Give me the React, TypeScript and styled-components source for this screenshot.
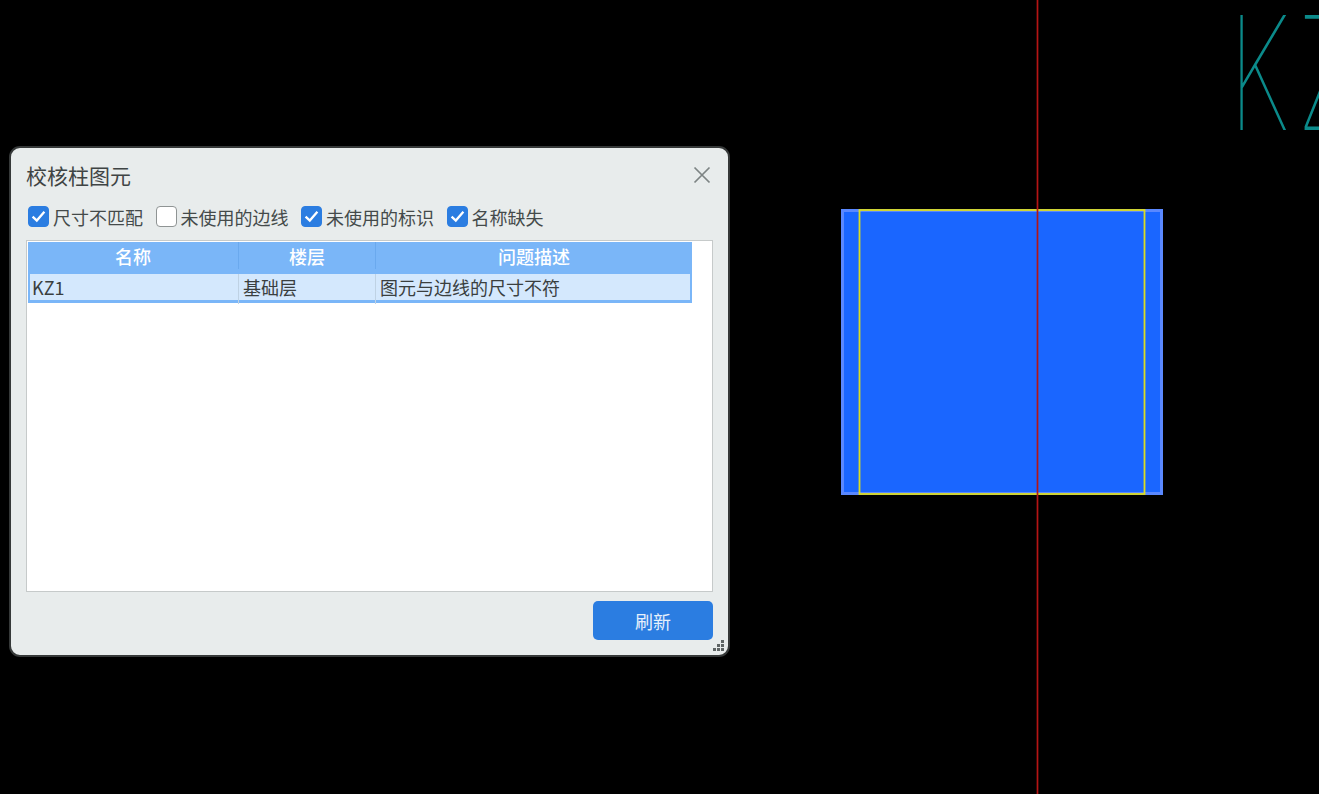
import React from "react";
import styled, { createGlobalStyle } from "styled-components";

const GlobalStyle = createGlobalStyle`
  html, body {
    margin: 0;
    padding: 0;
    background: #000;
    overflow: hidden;
  }
  * {
    box-sizing: border-box;
  }
`;

const Viewport = styled.div`
  position: relative;
  width: 1319px;
  height: 794px;
  background: #000;
  overflow: hidden;
  font-family: "Noto Sans CJK SC", "Noto Sans", sans-serif;
`;

const Drawing = styled.svg`
  position: absolute;
  inset: 0;
`;

const ColumnLabel = styled.div`
  position: absolute;
  left: 1229px;
  top: -22px;
  font-family: Inter, "Liberation Sans", sans-serif;
  font-size: 158px;
  font-weight: 100;
  line-height: 190px;
  letter-spacing: 12px;
  color: #0b8a8a;
  white-space: nowrap;
  transform: scaleX(0.64);
  transform-origin: left top;
`;

const Dialog = styled.div`
  position: absolute;
  left: 9px;
  top: 146px;
  width: 721px;
  height: 511px;
  display: flex;
  flex-direction: column;
  padding: 0 15px 15px;
  background: #e8ecec;
  border: 2px solid #363939;
  border-radius: 11px;
`;

const TitleBar = styled.div`
  height: 47px;
  flex: none;
  display: flex;
  align-items: center;
  justify-content: space-between;
  padding-top: 6px;
`;

const Title = styled.div`
  font-size: 21px;
  color: #3f4444;
`;

const CloseButton = styled.button`
  width: 20px;
  height: 20px;
  padding: 0;
  margin-right: 1px;
  border: none;
  background: none;
  display: flex;
  color: #7d8484;
`;

const FilterRow = styled.div`
  height: 45px;
  flex: none;
  display: flex;
  align-items: center;
  gap: 12.5px;
  padding: 0 0 2px 2px;
`;

const Filter = styled.label`
  display: flex;
  align-items: center;
  gap: 4px;
  font-size: 18px;
  color: #444a4a;
`;

const CheckBox = styled.span<{ $checked: boolean }>`
  width: 21px;
  height: 21px;
  display: flex;
  align-items: center;
  justify-content: center;
  border-radius: 4px;
  background: ${(p) => (p.$checked ? "#2b7de1" : "#fff")};
  border: 1px solid ${(p) => (p.$checked ? "#2b7de1" : "#8f9494")};
`;

const TableFrame = styled.div`
  flex: 1;
  padding: 1px 20px 0 1px;
  background: #fff;
  border: 1px solid #c6caca;
`;

const HeaderRow = styled.div`
  display: grid;
  grid-template-columns: 210px 137px 317px;
  height: 31px;
  background: #7ab6f8;
  padding-bottom: 4px;
`;

const HeaderCell = styled.div`
  display: flex;
  align-items: center;
  justify-content: center;
  font-size: 18px;
  font-weight: 500;
  color: #fff;
  border-left: 1px solid #6aa9ee;
  &:first-child {
    border-left: none;
  }
`;

const SelectedRow = styled.div`
  display: grid;
  grid-template-columns: 208px 137px 315px;
  height: 30px;
  background: #d4e8fd;
  border: 2px solid #7ab6f8;
  border-top-width: 1px;
  border-bottom-width: 3px;
`;

const Cell = styled.div`
  display: flex;
  align-items: center;
  padding: 0 0 4px 4px;
  font-size: 18px;
  color: #3a3f3f;
  border-left: 1px solid #bfd2e4;
  white-space: nowrap;
  &:first-child {
    border-left: none;
    padding-left: 2px;
  }
`;

const Footer = styled.div`
  height: 48px;
  flex: none;
  display: flex;
  justify-content: flex-end;
  align-items: flex-end;
`;

const RefreshButton = styled.button`
  width: 120px;
  height: 39px;
  border: none;
  border-radius: 5px;
  background: #2b7de1;
  color: #e6f0fb;
  font-family: inherit;
  font-size: 18px;
`;

const ResizeGrip = styled.svg`
  position: absolute;
  right: 3px;
  bottom: 2px;
`;

const filters = [
  { label: "尺寸不匹配", checked: true },
  { label: "未使用的边线", checked: false },
  { label: "未使用的标识", checked: true },
  { label: "名称缺失", checked: true },
];

function Tick() {
  return (
    <svg width="17" height="17" viewBox="0 0 17 17" fill="none">
      <path d="M2.6 8.6 L6.8 12.6 L14.4 3.8" stroke="#fff" strokeWidth="2.3" />
    </svg>
  );
}

export default function App() {
  return (
    <Viewport>
      <GlobalStyle />
      <Drawing width="1319" height="794" viewBox="0 0 1319 794">
        <rect x="842.5" y="210.5" width="319" height="283" fill="#1a66ff" stroke="#5a88ff" strokeWidth="3" />
        <rect x="859.5" y="210" width="285" height="284" fill="none" stroke="#dcdc20" strokeWidth="1.8" />
        <line x1="1037.5" y1="0" x2="1037.5" y2="794" stroke="#b51414" strokeWidth="1.7" />
      </Drawing>
      <ColumnLabel>KZ</ColumnLabel>

      <Dialog>
        <TitleBar>
          <Title>校核柱图元</Title>
          <CloseButton>
            <svg width="20" height="20" viewBox="0 0 20 20" stroke="currentColor" strokeWidth="1.7">
              <path d="M2.5 2.5 L17.5 17.5 M17.5 2.5 L2.5 17.5" />
            </svg>
          </CloseButton>
        </TitleBar>

        <FilterRow>
          {filters.map((f) => (
            <Filter key={f.label}>
              <CheckBox $checked={f.checked}>{f.checked && <Tick />}</CheckBox>
              {f.label}
            </Filter>
          ))}
        </FilterRow>

        <TableFrame>
          <HeaderRow>
            <HeaderCell>名称</HeaderCell>
            <HeaderCell>楼层</HeaderCell>
            <HeaderCell>问题描述</HeaderCell>
          </HeaderRow>
          <SelectedRow>
            <Cell>KZ1</Cell>
            <Cell>基础层</Cell>
            <Cell>图元与边线的尺寸不符</Cell>
          </SelectedRow>
        </TableFrame>

        <Footer>
          <RefreshButton>刷新</RefreshButton>
        </Footer>

        <ResizeGrip width="13" height="13" viewBox="0 0 13 13" fill="#5e6464">
          <rect x="9" y="0" width="3" height="3" />
          <rect x="5" y="4" width="3" height="3" />
          <rect x="9" y="4" width="3" height="3" />
          <rect x="1" y="8" width="3" height="3" />
          <rect x="5" y="8" width="3" height="3" />
          <rect x="9" y="8" width="3" height="3" />
        </ResizeGrip>
      </Dialog>
    </Viewport>
  );
}
